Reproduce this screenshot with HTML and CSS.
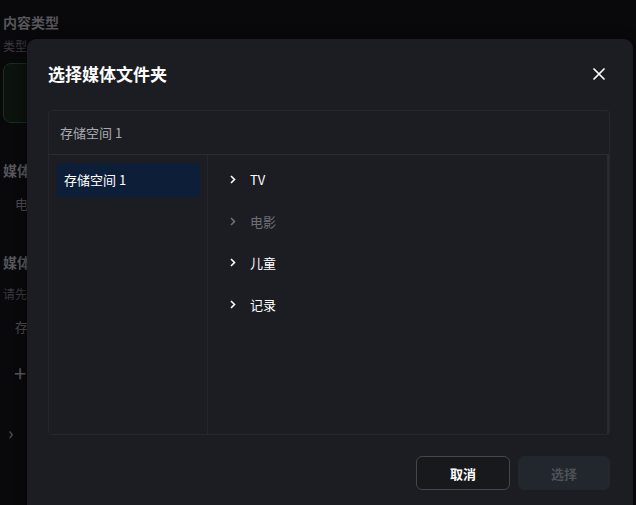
FILE: index.html
```html
<!DOCTYPE html>
<html lang="zh-CN">
<head>
    <meta charset="UTF-8">
    <meta name="viewport" content="width=device-width, initial-scale=1.0">
    <title>选择媒体文件夹</title>
    <link rel="stylesheet" href="styles.css">
</head>
<body>
    <div class="page">
        <h3 class="section-title">内容类型</h3>
        <div class="label">类型</div>
        <div class="type-card"></div>
        <h3 class="section-title mt">媒体库</h3>
        <div class="row-text">电影</div>
        <h3 class="section-title mt2">媒体文件夹</h3>
        <div class="label hint">请先选择</div>
        <div class="row-text">存储空间</div>
        <div class="plus">+</div>
        <div class="more">&#8250;</div>
    </div>

    <div class="dialog">
        <div class="dialog-head">
            <h2>选择媒体文件夹</h2>
            <span class="close">
                <svg width="12" height="12" viewBox="0 0 12 12"><path d="M1 1L11 11M11 1L1 11" stroke="#fff" stroke-width="1.7" stroke-linecap="round"/></svg>
            </span>
        </div>
        <div class="browser">
            <div class="browser-head">存储空间 1</div>
            <div class="browser-body">
                <div class="volumes">
                    <div class="volume active">存储空间 1</div>
                </div>
                <div class="folders">
                    <div class="folder"><svg class="chev" width="6" height="9" viewBox="0 0 6 9"><path d="M1 1l3.5 3.5L1 8" fill="none" stroke="currentColor" stroke-width="1.6"/></svg>TV</div>
                    <div class="folder dim"><svg class="chev" width="6" height="9" viewBox="0 0 6 9"><path d="M1 1l3.5 3.5L1 8" fill="none" stroke="currentColor" stroke-width="1.6"/></svg>电影</div>
                    <div class="folder"><svg class="chev" width="6" height="9" viewBox="0 0 6 9"><path d="M1 1l3.5 3.5L1 8" fill="none" stroke="currentColor" stroke-width="1.6"/></svg>儿童</div>
                    <div class="folder"><svg class="chev" width="6" height="9" viewBox="0 0 6 9"><path d="M1 1l3.5 3.5L1 8" fill="none" stroke="currentColor" stroke-width="1.6"/></svg>记录</div>
                </div>
            </div>
        </div>
        <div class="dialog-foot">
            <button class="btn">取消</button>
            <button class="btn primary" disabled>选择</button>
        </div>
    </div>
</body>
</html>
```

FILE: styles.css
```css
* {
    box-sizing: border-box;
}
body {
    margin: 0;
    background-color: #09090c;
    font-family: "Noto Sans CJK SC", "Noto Sans", sans-serif;
    color: #fff;
    height: 505px;
    overflow: hidden;
}
.page {
    padding: 12px 0 0 3px;
    color: #4b4b50;
}
.section-title {
    margin: 0;
    font-size: 14px;
    line-height: 20px;
    font-weight: bold;
    color: #55555a;
}
.section-title.mt {
    margin-top: 37px;
}
.section-title.mt2 {
    margin-top: 39px;
}
.label {
    font-size: 12px;
    line-height: 18px;
    margin-top: 5px;
    color: #3a3a3e;
}
.label.hint {
    margin-top: 13px;
}
.type-card {
    margin-top: 8px;
    width: 60px;
    height: 60px;
    border: 1px solid #16301a;
    border-radius: 8px;
    background-color: #0c120d;
}
.row-text {
    font-size: 13px;
    line-height: 18px;
    margin: 15px 0 0 12px;
    color: #4a4a4e;
}
.plus {
    font-size: 22px;
    line-height: 24px;
    margin: 24px 0 0 11px;
    color: #55555a;
}
.more {
    font-size: 18px;
    margin: 35px 0 0 5px;
    color: #55555a;
}

.dialog {
    position: absolute;
    left: 27px;
    top: 39px;
    width: 606px;
    height: 490px;
    background-color: #1c1d22;
    border-radius: 9px;
    padding: 22px 23px 0 21px;
    box-shadow: 0 0 12px rgba(0, 0, 0, 0.5);
}
.dialog-head {
    display: flex;
    justify-content: space-between;
    align-items: center;
}
.dialog-head h2 {
    margin: 0;
    font-size: 17px;
    line-height: 26px;
    font-weight: bold;
}
.close {
    display: flex;
    margin-right: 5px;
}
.browser {
    margin-top: 23px;
    height: 325px;
    border: 1px solid #26272d;
    border-radius: 4px;
    display: flex;
    flex-direction: column;
}
.browser-head {
    height: 44px;
    line-height: 44px;
    padding-left: 11px;
    font-size: 13px;
    color: #a9aaae;
    border-bottom: 1px solid #2b2c32;
}
.browser-body {
    flex: 1;
    display: flex;
}
.volumes {
    width: 159px;
    padding: 8px 7px 8px 8px;
    border-right: 1px solid #26272d;
    background-color: #1b1d23;
}
.volume {
    height: 34px;
    line-height: 34px;
    padding-left: 7px;
    font-size: 13px;
    border-radius: 3px;
}
.volume.active {
    background-color: #0d1f38;
}
.folders {
    flex: 1;
    padding: 4px 0 0 22px;
    border-right: 2px solid #2a2b31;
}
.folder {
    height: 41.5px;
    display: flex;
    align-items: center;
    font-size: 13px;
}
.folder.dim {
    color: #6f7075;
}
.chev {
    margin-right: 14px;
}
.dialog-foot {
    margin-top: 21px;
    display: flex;
    justify-content: flex-end;
    gap: 8px;
}
.btn {
    height: 34px;
    width: 94px;
    border: 1px solid #45464c;
    border-radius: 6px;
    background-color: #18191d;
    color: #fff;
    font-family: inherit;
    font-size: 13px;
    font-weight: bold;
}
.btn.primary {
    width: 92px;
    border-color: #22272d;
    background-color: #22272d;
    color: #4e5156;
}
```
